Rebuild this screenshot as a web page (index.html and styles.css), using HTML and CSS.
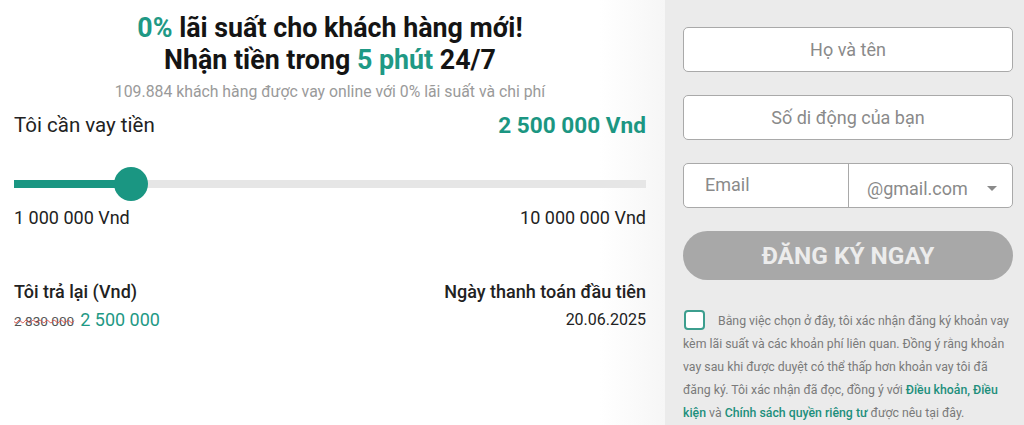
FILE: index.html
```html
<!DOCTYPE html>
<html lang="vi">
<head>
<meta charset="utf-8">
<title>Vay online</title>
<link rel="stylesheet" href="styles.css">
</head>
<body>
<div class="page">
  <section class="calc">
    <h1 class="title"><span class="accent">0%</span> lãi suất cho khách hàng mới!<br>Nhận tiền trong <span class="accent">5 phút</span> 24/7</h1>
    <p class="subtitle">109.884 khách hàng được vay online với 0% lãi suất và chi phí</p>
    <div class="row amount-row">
      <span class="amount-label">Tôi cần vay tiền</span>
      <span class="amount-value">2 500 000 Vnd</span>
    </div>
    <div class="slider">
      <div class="track"><div class="fill" style="width:117px"></div></div>
      <div class="thumb" style="left:100px"></div>
    </div>
    <div class="row range-row">
      <span>1 000 000 Vnd</span>
      <span>10 000 000 Vnd</span>
    </div>
    <div class="row repay-head">
      <span>Tôi trả lại (Vnd)</span>
      <span>Ngày thanh toán đầu tiên</span>
    </div>
    <div class="row repay-vals">
      <span class="prices"><span class="old">2 830 000</span> <span class="new">2 500 000</span></span>
      <span class="date">20.06.2025</span>
    </div>
  </section>
  <aside class="form">
    <div class="field">Họ và tên</div>
    <div class="field">Số di động của bạn</div>
    <div class="field email">
      <span class="email-name">Email</span>
      <span class="email-domain">@gmail.com <span class="caret"></span></span>
    </div>
    <div class="btn">ĐĂNG KÝ NGAY</div>
    <p class="consent"><span class="check"></span>Bằng việc chọn ở đây, tôi xác nhận đăng ký khoản vay kèm lãi suất và các khoản phí liên quan. Đồng ý rằng khoản vay sau khi được duyệt có thể thấp hơn khoản vay tôi đã đăng ký. Tôi xác nhận đã đọc, đồng ý với <span class="link">Điều khoản, Điều kiện</span> và <span class="link">Chính sách quyền riêng tư</span> được nêu tại đây.</p>
  </aside>
</div>
</body>
</html>
```

FILE: styles.css
```css
* { box-sizing: border-box; }
html, body { margin: 0; padding: 0; }
body {
  font-family: Roboto, "Noto Sans", Arial, sans-serif;
  background: #fff;
  color: #222;
  width: 1024px;
  height: 425px;
  overflow: hidden;
}
.page {
  display: flex;
  height: 425px;
}
.calc {
  width: 665px;
  padding: 12px 19px 0 14px;
  background: linear-gradient(to right, #fff 0, #fff 600px, #f6f6f6 665px);
}
.title {
  margin: 0;
  text-align: center;
  font-size: 26.8px;
  line-height: 32px;
  font-weight: 700;
  color: #141414;
}
.accent { color: #1f9985; }
.subtitle {
  margin: 6px 0 0;
  text-align: center;
  font-size: 15.8px;
  line-height: 20px;
  color: #9a9a9a;
}
.row {
  display: flex;
  justify-content: space-between;
  align-items: center;
}
.amount-row { margin-top: 11px; height: 24px; }
.amount-label { font-size: 20.5px; color: #222; }
.amount-value { font-size: 22.6px; font-weight: 700; color: #1b9682; }
.slider {
  position: relative;
  height: 34px;
  margin-top: 30px;
  display: flex;
  align-items: center;
}
.track {
  width: 100%;
  height: 8px;
  background: #e6e6e6;
}
.fill {
  height: 100%;
  background: #1a9682;
}
.thumb {
  position: absolute;
  top: 0;
  width: 34px;
  height: 34px;
  border-radius: 50%;
  background: #1a9682;
}
.range-row { margin-top: 6px; font-size: 18px; color: #222; height: 20px; }
.repay-head { margin-top: 53px; font-size: 18px; font-weight: 500; color: #222; height: 22px; }
.repay-vals { margin-top: 6px; height: 22px; }
.old {
  font-size: 13.6px;
  color: #555;
  text-decoration: line-through wavy #d9534f;
  text-decoration-thickness: 1px;
}
.new { font-size: 18px; color: #1f9985; margin-left: 2px; }
.date { font-size: 16px; color: #222; }
.form {
  width: 359px;
  background: #ebebeb;
  padding: 27px 11px 0 18px;
}
.field {
  height: 45px;
  background: #fff;
  border: 1px solid #a9a9a9;
  border-radius: 5px;
  display: flex;
  align-items: center;
  justify-content: center;
  font-size: 18px;
  color: #8a8a8a;
  margin-bottom: 23px;
}
.field.email { justify-content: flex-start; align-items: stretch; }
.email-name {
  width: 165px;
  border-right: 1px solid #a9a9a9;
  padding: 10px 0 0 21px;
}
.email-domain {
  flex: 1;
  display: flex;
  align-items: center;
  padding: 5px 0 0 18px;
  color: #8a8a8a;
}
.caret {
  width: 0;
  height: 0;
  margin-left: auto;
  margin-right: 15px;
  border-left: 5px solid transparent;
  border-right: 5px solid transparent;
  border-top: 5px solid #8a8a8a;
}
.btn {
  height: 49px;
  border-radius: 25px;
  background: #a8a8a8;
  color: #ececec;
  font-size: 24.4px;
  font-weight: 700;
  display: flex;
  align-items: center;
  justify-content: center;
}
.consent {
  margin: 30px 0 0;
  font-size: 12.3px;
  line-height: 23px;
  color: #7a7a7a;
}
.check {
  display: inline-block;
  width: 21px;
  height: 20px;
  border: 2px solid #3c9e8e;
  border-radius: 4px;
  background: #fff;
  vertical-align: -5px;
  margin-right: 13px;
  margin-left: 1px;
}
.link { color: #1d8f7c; font-weight: 500; }
```
